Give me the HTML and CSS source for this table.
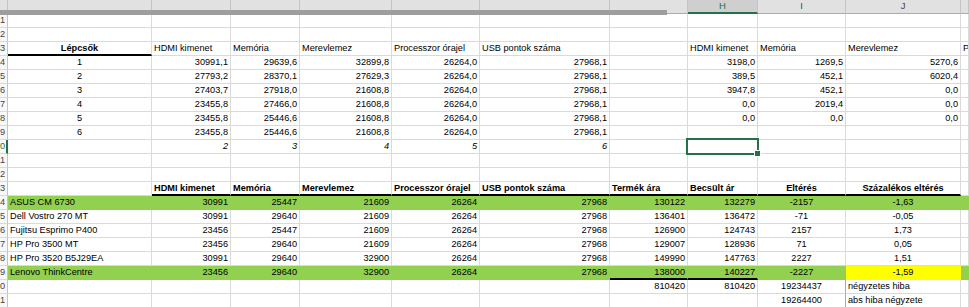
FILE: index.html
```html
<!DOCTYPE html>
<html lang="hu">
<head>
  <meta charset="UTF-8">
  <title>Munkafüzet</title>
  <link rel="stylesheet" href="styles.css">
</head>
<body>
<div class="sheet" id="sheet"></div>
<div class="split"></div>

<script>
  //oszlopok: A..K, a sorfejléc külön
  var letters = ['', '', '', '', '', '', '', 'H', 'I', 'J', ''];
  var data = {
    3: ['Lépcsők|b c bb', 'HDMI kimenet', 'Memória', 'Merevlemez', 'Processzor órajel', 'USB pontok száma', '', 'HDMI kimenet', 'Memória', 'Merevlemez', 'Processzor órajel'],
    4: ['1|c', '30991,1', '29639,6', '32899,8', '26264,0', '27968,1', '', '3198,0', '1269,5', '5270,6'],
    5: ['2|c', '27793,2', '28370,1', '27629,3', '26264,0', '27968,1', '', '389,5', '452,1', '6020,4'],
    6: ['3|c', '27403,7', '27918,0', '21608,8', '26264,0', '27968,1', '', '3947,8', '452,1', '0,0'],
    7: ['4|c', '23455,8', '27466,0', '21608,8', '26264,0', '27968,1', '', '0,0', '2019,4', '0,0'],
    8: ['5|c', '23455,8', '25446,6', '21608,8', '26264,0', '27968,1', '', '0,0', '0,0', '0,0'],
    9: ['6|c', '23455,8', '25446,6', '21608,8', '26264,0', '27968,1'],
    10: ['', '2|i', '3|i', '4|i', '5|i', '6|i', '', '|sel'],
    13: ['', 'HDMI kimenet|b bb', 'Memória|b bb', 'Merevlemez|b bb', 'Processzor órajel|b bb', 'USB pontok száma|b bb', 'Termék ára|b bb', 'Becsült ár|b bb', 'Eltérés|b c bb', 'Százalékos eltérés|b c bb'],
    14: ['ASUS CM 6730', '30991', '25447', '21609', '26264', '27968', '130122', '132279', '-2157|c', '-1,63|c'],
    15: ['Dell Vostro 270 MT', '30991', '29640', '21609', '26264', '27968', '136401', '136472', '-71|c', '-0,05|c'],
    16: ['Fujitsu Esprimo P400', '23456', '25447', '21609', '26264', '27968', '126900', '124743', '2157|c', '1,73|c'],
    17: ['HP Pro 3500 MT', '23456', '29640', '21609', '26264', '27968', '129007', '128936', '71|c', '0,05|c'],
    18: ['HP Pro 3520 B5J29EA', '30991', '29640', '32900', '26264', '27968', '149990', '147763', '2227|c', '1,51|c'],
    19: ['Lenovo ThinkCentre', '23456', '29640', '32900', '26264', '27968', '138000|bb', '140227|bb', '-2227|c', '-1,59|c yellow'],
    20: ['', '', '', '', '', '', '810420', '810420', '19234437|c sum', 'négyzetes hiba'],
    21: ['', '', '', '', '', '', '', '', '19264400|c sum', 'abs hiba négyzete']
  };
  var greenRows = {14: 1, 19: 1};//kiemelt sorok
  var activeRow = 10;

  function cell(cls, text) {
    var d = document.createElement('div');
    d.className = cls;
    d.textContent = text;
    return d;
  }

  var frag = document.createDocumentFragment();
  frag.appendChild(cell('colhead corner', ''));
  for (var c = 0; c < letters.length; c++) {
    frag.appendChild(cell('colhead' + (letters[c] === 'H' ? ' active' : ''), letters[c]));
  }
  for (var r = 1; r <= 21; r++) {
    var head = cell('rowhead' + (r === activeRow ? ' active' : ''), '');
    head.appendChild(cell('num', r));
    frag.appendChild(head);
    for (var c = 0; c < letters.length; c++) {
      var spec = ((data[r] && data[r][c]) || '').split('|');
      var cls = 'cell';
      if (/^-?[\d,]+$/.test(spec[0])) cls += ' n';//szám jobbra
      if (greenRows[r]) cls += ' green';
      if (spec[1]) cls += ' ' + spec[1];
      frag.appendChild(cell(cls, spec[0]));
    }
  }
  sheet.appendChild(frag);
</script>
</body>
</html>
```

FILE: styles.css
```css
/*alap*/
html, body {
  margin: 0;
  height: 100%;
  overflow: hidden;
  background: #fff;
}

body {
  font: 9.2px/13px "Liberation Sans", Arial, sans-serif;
  color: #000;
}

.sheet {
  display: grid;
  grid-template-columns: 8px 144px 79px 69px 92px 88px 130px 78px 70px 88px 115px 1fr;
  grid-auto-rows: 14px;
}

.sheet > div {
  box-sizing: border-box;
  white-space: nowrap;
  overflow: hidden;
}

/*oszlopfejléc*/
.colhead {
  background: #e1e1e1;
  border-right: 1px solid #c4c4c4;
  border-bottom: 1px solid #ababab;
  text-align: center;
  color: #444;
  font-size: 9.5px;
  line-height: 12px;
}

.colhead.active {
  background: #cfcfcf;
  color: #217346;
  border-bottom: 2px solid #217346;
}

/*sorfejléc*/
.rowhead {
  display: flex;
  justify-content: flex-end;
  padding-right: 2px;
  background: #f8f8f8;
  border-right: 1px solid #c4c4c4;
  border-bottom: 1px solid #dadada;
  color: #444;
}

.rowhead.active {
  color: #217346;
  border-right: 2px solid #217346;
  padding-right: 1px;
}

/*cellák*/
.cell {
  padding: 0 2px;
  border-right: 1px solid #dadada;
  border-bottom: 1px solid #dadada;
}

.cell.n {
  text-align: right;
}

.cell.c {
  text-align: center;
}

.cell.b {
  font-weight: bold;
}

.cell.i {
  font-style: italic;
}

.cell.bb {
  border-bottom: 2px solid #000;
  line-height: 12px;
}

.cell.green {
  background: #92d050;
  border-right-color: transparent;
}

.cell.green:not(.bb) {
  border-bottom-color: transparent;
}

.cell.yellow {
  background: #ffff00;
}

.cell.sum {
  border-right-color: #a8a8a8;
}

/*kijelölt cella*/
.cell.sel {
  position: relative;
  overflow: visible;
  z-index: 1;
}

.cell.sel::before {
  content: '';
  position: absolute;
  left: -2px;
  top: -2px;
  right: -2px;
  bottom: -2px;
  border: 2px solid #217346;
}

.cell.sel::after {
  content: '';
  position: absolute;
  right: -4px;
  bottom: -4px;
  width: 5px;
  height: 5px;
  background: #217346;
  border: 1px solid #fff;
}

/*ablaktábla elválasztó*/
.split {
  position: absolute;
  left: 0;
  top: 10px;
  width: 667px;
  height: 5px;
  background: #9e9e9e;
}
```
